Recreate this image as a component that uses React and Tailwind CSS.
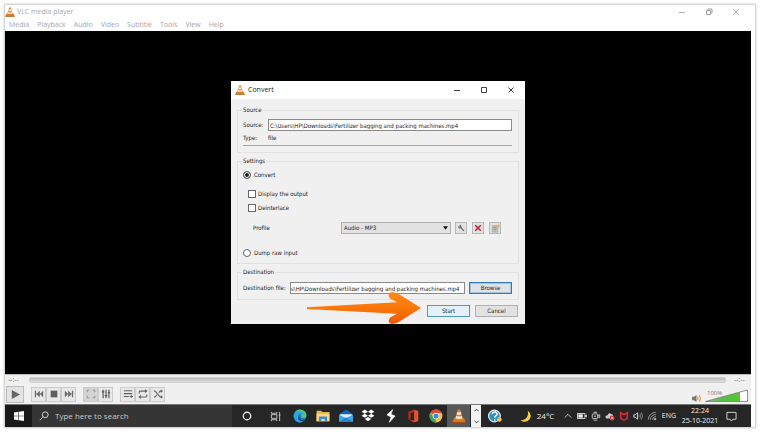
import React from "react";

function Cone({ className }) {
  return (
    <svg viewBox="0 0 24 24" className={className} aria-hidden="true">
      <path d="M3.500 15.500h17l3 7.500h-23z" fill="#d9781c" />
      <path d="M10 1h4l5 17q-7 3-14 0z" fill="#e08325" />
      <path d="M8.800 5.500h6.400l1 3.800q-4.200 1.500-8.400 0z" fill="#f3e6d6" />
      <path d="M6.900 12.200q5.100 1.700 10.200 0l1 3.800q-6.100 2-12.200 0z" fill="#f3e6d6" />
      <path d="M.5 23h23" stroke="#9c4f12" strokeWidth="1.500" />
    </svg>
  );
}

const menus = ["Media", "Playback", "Audio", "Video", "Subtitle", "Tools", "View", "Help"];

function TitleBar() {
  return (
    <header className="bg-white text-[#a6a6a6]">
      <div className="flex h-[14px] items-center pr-[10px]">
        <Cone className="h-[10px] w-[10px]" />
        <h1 className="ml-[2px] text-[7px] leading-[12px]">VLC media player</h1>
        <div className="ml-auto flex items-center gap-[17px]">
          <button aria-label="Minimise" className="h-[10px] w-[10px]">
            <svg viewBox="0 0 10 10" className="h-[10px] w-[10px]"><path d="M2 5.500h6" stroke="#b0b0b0" /></svg>
          </button>
          <button aria-label="Restore" className="h-[10px] w-[10px]">
            <svg viewBox="0 0 10 10" className="h-[10px] w-[10px]"><path d="M2.500 3.500h4v4h-4zM4 3.500v-1.500h4v4h-1.500" fill="none" stroke="#a0a0a0" /></svg>
          </button>
          <button aria-label="Close" className="h-[10px] w-[10px]">
            <svg viewBox="0 0 10 10" className="h-[10px] w-[10px]"><path d="M2 2l6 6M8 2l-6 6" stroke="#a6a6a6" strokeWidth=".9" /></svg>
          </button>
        </div>
      </div>
      <nav className="flex h-[12px] items-center gap-[8px] pl-[4px] text-[7px] leading-[10px]">
        {menus.map((m) => (
          <button key={m}>{m}</button>
        ))}
      </nav>
    </header>
  );
}

function Group({ title, children, className }) {
  return (
    <fieldset className={"min-w-0 border border-[#e1e1e1] pl-[5px] pr-[6px] " + className}>
      <legend className="-ml-px h-[10px] px-px leading-[10px]">{title}</legend>
      {children}
    </fieldset>
  );
}

function Radio({ label, checked }) {
  return (
    <label className="flex h-[10px] items-center gap-[3px]">
      <input
        type="radio"
        name="mode"
        defaultChecked={checked}
        className="h-[8px] w-[8px] appearance-none rounded-full border border-[#666] bg-white checked:bg-[#222] checked:shadow-[inset_0_0_0_1px_#fff]"
      />
      {label}
    </label>
  );
}

function Check({ label }) {
  return (
    <label className="flex h-[10px] items-center gap-[2px]">
      <input type="checkbox" className="h-[8px] w-[8px] appearance-none border border-[#666] bg-white checked:bg-[#333]" />
      {label}
    </label>
  );
}

const smallButton = "flex h-[12px] w-[12px] items-center justify-center border border-[#b8b8b8] bg-[#e2e2e2]";

function ConvertDialog() {
  return (
    <section role="dialog" aria-label="Convert" className="relative w-[294px] bg-[#f0f0f0] font-['DejaVu_Sans_Condensed','Open_Sans',sans-serif] text-[6px] leading-[10px] text-[#1c1c1c]">
      <div className="flex h-[18px] items-center bg-white pl-[4px] pr-[9px]">
        <Cone className="h-[10px] w-[10px]" />
        <h2 className="ml-[3px] font-['Open_Sans','Noto_Sans',sans-serif] text-[7px]">Convert</h2>
        <div className="ml-auto flex gap-[17px]">
          <button aria-label="Minimise">
            <svg viewBox="0 0 10 10" className="h-[10px] w-[10px]"><path d="M2 5.500h6" stroke="#444" /></svg>
          </button>
          <button aria-label="Maximise">
            <svg viewBox="0 0 10 10" className="h-[10px] w-[10px]"><path d="M2.500 2.500h5v5h-5z" fill="none" stroke="#444" /></svg>
          </button>
          <button aria-label="Close">
            <svg viewBox="0 0 10 10" className="h-[10px] w-[10px]"><path d="M2.500 2.500l5 5M7.500 2.500l-5 5" stroke="#222" strokeWidth=".9" /></svg>
          </button>
        </div>
      </div>
      <form className="flex flex-col gap-[3px] px-[6px] pb-[7px] pt-[6px]" onSubmit={(e) => e.preventDefault()}>
        <Group title="Source" className="pb-[6px] pt-[4px]">
          <div className="flex items-center">
            <label htmlFor="source" className="w-[25px] shrink-0 whitespace-nowrap">Source:</label>
            <input
              id="source"
              className="h-[12px] min-w-0 flex-1 border border-[#8a8a8a] bg-white px-px"
              defaultValue="C:\Users\HP\Downloads\Fertilizer bagging and packing machines.mp4"
            />
          </div>
          <div className="mt-[2px] flex border-b border-[#a5a5a5] pb-[2px]">
            <span className="w-[25px]">Type:</span>
            <span>file</span>
          </div>
        </Group>
        <Group title="Settings" className="pb-[5px] pt-[4px]">
          <Radio label="Convert" checked />
          <div className="mt-[9px] flex flex-col gap-[4px] pl-[5px]">
            <Check label="Display the output" />
            <Check label="Deinterlace" />
          </div>
          <div className="mt-[9px] flex items-center pl-[10px] pr-[11px]">
            <label htmlFor="profile">Profile</label>
            <div className="relative ml-auto w-[110px]">
              <select id="profile" className="block h-[12px] w-full appearance-none border border-[#b0b0b0] bg-[#e2e2e2] pl-[2px]">
                <option>Audio - MP3</option>
              </select>
              <svg viewBox="0 0 6 4" className="pointer-events-none absolute right-[3px] top-[4px] h-[4px] w-[5px]"><path d="M0 0h6l-3 4z" fill="#111" /></svg>
            </div>
            <div className="ml-[4px] flex gap-[5px]">
              <button type="button" aria-label="Edit profile" className={smallButton}>
                <svg viewBox="0 0 10 10" className="h-[8px] w-[8px]"><path d="M3.200 1v2.200H1A2.400 2.400 0 0 0 4.300 5.300L8 9.200 9.300 8 5.500 4.200A2.400 2.400 0 0 0 3.200 1z" fill="#6c6c6c" /></svg>
              </button>
              <button type="button" aria-label="Delete profile" className={smallButton}>
                <svg viewBox="0 0 10 10" className="h-[8px] w-[8px]"><path d="M1.500 1.500l7 7M8.500 1.500l-7 7" stroke="#c4232b" strokeWidth="2" /></svg>
              </button>
              <button type="button" aria-label="New profile" className={smallButton}>
                <svg viewBox="0 0 10 10" className="h-[9px] w-[9px]"><path d="M1.500 2h6v7h-6z" fill="#c9c9c2" stroke="#999" strokeWidth=".7" /><path d="M2.500 4h4M2.500 6h4M4.500 2.500v6" stroke="#888" strokeWidth=".6" /><circle cx="8" cy="2.300" r="1.800" fill="#eeb04a" /></svg>
              </button>
            </div>
          </div>
          <div className="mt-[14px]">
            <Radio label="Dump raw input" />
          </div>
        </Group>
        <Group title="Destination" className="pb-[5px] pt-[5px]">
          <div className="flex items-center">
            <label htmlFor="dest" className="w-[47px] shrink-0 whitespace-nowrap">Destination file:</label>
            <input
              id="dest"
              className="h-[12px] min-w-0 flex-1 border border-[#8a8a8a] bg-white"
              defaultValue="s\HP\Downloads\Fertilizer bagging and packing machines.mp4"
            />
            <button type="button" className="ml-[4px] h-[12px] w-[43px] border border-[#2f7cbf] bg-[#e2e2e2] shadow-[inset_0_0_0_1px_#9fc3e0]">Browse</button>
          </div>
        </Group>
        <div className="mt-[2px] flex justify-end gap-[5px] pr-px">
          <button className="h-[12px] w-[43px] border border-[#4e9bc8] bg-[#e5f1fa]">Start</button>
          <button type="button" className="h-[12px] w-[43px] border border-[#b0b0b0] bg-[#e2e2e2]">Cancel</button>
        </div>
      </form>
      <svg viewBox="0 0 116 34" className="pointer-events-none absolute left-[75px] top-[210px] h-[34px] w-[116px]" aria-hidden="true">
        <defs>
          <linearGradient id="arrow" x1="0" y1="0" x2="0" y2="1">
            <stop offset="0" stopColor="#ff8c1a" />
            <stop offset=".55" stopColor="#fb7408" />
            <stop offset="1" stopColor="#e95a00" />
          </linearGradient>
        </defs>
        <path d="M1 16.300L91 11.300 84 7.500Q80 1 87 1L92 2.500 115 17 92 31.500 87 33Q80 33 84 26.500L91 22.700 1 18Z" fill="url(#arrow)" />
      </svg>
    </section>
  );
}

const toolGroups = [
  [
    ["Previous", <path key="a" d="M1 2v8h1.500V2zM7 2v8L2.500 6zM11 2v8L7 6z" fill="#6a6a6a" />],
    ["Stop", <path key="a" d="M2 2h8v8H2z" fill="#5f5f5f" />],
    ["Next", <path key="a" d="M11 2v8H9.500V2zM5 2v8l4.500-4zM1 2v8l4-4z" fill="#6a6a6a" />],
  ],
  [
    ["Full screen", <path key="a" d="M1.500 4V1.500H4M8 1.500h2.500V4M10.500 8v2.500H8M4 10.500H1.500V8" fill="none" stroke="#999" strokeWidth="1.300" />],
    ["Extended settings", <path key="a" d="M2.500 1v10M6 1v10M9.500 1v10M1 3.500h3M4.500 8h3M8 4.500h3" fill="none" stroke="#555" strokeWidth="1.400" />],
  ],
  [
    ["Playlist", <path key="a" d="M1 2h10M1 5.500h10M1 9h6M8 9h4M10 7.500v3" fill="none" stroke="#606060" strokeWidth="1.300" />],
    ["Loop", <path key="a" d="M1.500 5.500V3.500q0-1 1-1H10M10.500 6.500v2q0 1-1 1H2M8.500.800l2 1.700-2 1.700M3.500 7.800l-2 1.700 2 1.700" fill="none" stroke="#666" strokeWidth="1.300" />],
    ["Shuffle", <path key="a" d="M1 2.500h1.500L8.500 9.500H11M1 9.500h1.500l2-2.500M7 4.500l1.500-2H11M9.500 1l1.500 1.500L9.500 4M9.500 8L11 9.500 9.500 11" fill="none" stroke="#666" strokeWidth="1.300" />],
  ],
];

function Controls() {
  return (
    <div className="border-t border-[#bdbdbd] bg-[#f0f0f0] text-[7px] leading-[8px] text-[#777]">
      <div className="flex h-[9px] items-center gap-[8px] pl-[3px] pr-[4px]">
        <span className="w-[13px]">--:--</span>
        <input
          type="range"
          aria-label="Position"
          defaultValue="0"
          className="h-[6px] min-w-0 flex-1 appearance-none rounded-[2px] border border-[#cfcfcf] bg-linear-to-b from-[#bcbcbc] to-[#dedede] [&::-webkit-slider-thumb]:h-0 [&::-webkit-slider-thumb]:w-0 [&::-webkit-slider-thumb]:appearance-none"
        />
        <span className="w-[13px]">--:--</span>
      </div>
      <div className="flex h-[20px] items-center pl-px pr-[3px]">
        <button aria-label="Play" className="flex h-[17px] w-[18px] items-center justify-center border border-[#bcbcbc] bg-[#e3e3e3]">
          <svg viewBox="0 0 12 12" className="h-[11px] w-[11px]"><path d="M2 1l9 5-9 5z" fill="#666" /></svg>
        </button>
        {toolGroups.map((group, i) => (
          <div key={i} className="ml-[7px] flex">
            {group.map(([label, icon]) => (
              <button
                key={label}
                aria-label={label}
                disabled={label === "Full screen"}
                className="flex h-[15px] w-[15px] items-center justify-center border border-[#cbcbcb] bg-[#e8e8e8] disabled:bg-[#d4d4d4]"
              >
                <svg viewBox="0 0 12 12" className="h-[10px] w-[10px]">{icon}</svg>
              </button>
            ))}
          </div>
        ))}
        <button aria-label="Mute" className="ml-auto mt-[8px]">
          <svg viewBox="0 0 10 10" className="h-[9px] w-[9px]"><path d="M0 3h2l3-2v8L2 7H0z" fill="#777" /><path d="M6 3q1.500 2 0 4M8 1.500q2.500 3.500 0 7" fill="none" stroke="#e2a04a" strokeWidth="1.300" /></svg>
        </button>
        <label className="relative ml-[4px] mt-[2px] block h-[16px] w-[43px]">
          <svg viewBox="0 0 43 16" className="absolute inset-0 h-full w-full" aria-hidden="true">
            <defs>
              <linearGradient id="volume"><stop offset="0" stopColor="#9ab59a" /><stop offset=".5" stopColor="#55bf45" /><stop offset="1" stopColor="#55c832" /></linearGradient>
            </defs>
            <path d="M.5 14.500L42.500 3v11.500z" fill="#fff" />
            <path d="M.5 14.500L35 5v9.500z" fill="url(#volume)" />
            <path d="M.5 14.500L42.500 3v11.500z" fill="none" stroke="#777" strokeWidth=".8" />
          </svg>
          <span className="absolute left-[2px] top-[2px] text-[6px]">100%</span>
          <input type="range" aria-label="Volume" defaultValue="100" className="absolute inset-0 w-full opacity-0" />
        </label>
      </div>
    </div>
  );
}

const apps = [
  ["Edge", <g key="a"><circle cx="12" cy="12" r="11" fill="#1673c6" /><path d="M2 8Q6 0 14 1.200 23 3 23 11q0 5-6 5-4 0-3-3 1-4-3-5T2 10z" fill="#4fc878" /><path d="M1 12Q2 4 11 4q7 1 7 6-5-3-8 0-3 5 2 9 4 3 8 0-4 5-10 4-8-2-9-11" fill="#2ba5df" /><path d="M10 12q-3 5 2 8 5 2 9-1-3-1-7 0-4-2-4-7" fill="#0d3f7e" /></g>],
  ["File Explorer", <g key="a"><path d="M1 3h8l2 2h12v16H1z" fill="#e9b545" /><path d="M1 8h22v13H1z" fill="#f9d880" /><path d="M5 21v-8h14v8h-4v-4H9v4z" fill="#3b8fd0" /></g>],
  ["Mail", <g key="a"><path d="M0 9L12 1l12 8v13H0z" fill="#1267b4" /><path d="M2 9h20v6H2z" fill="#dff0fb" /><path d="M0 10l12 6 12-6v12H0z" fill="#3ba5e8" /><path d="M0 22l12-7 12 7z" fill="#2282cc" /></g>],
  ["Dropbox", <path key="a" d="M6.500 1L12 4.500 6.500 8 1 4.500zM17.500 1L23 4.500 17.500 8 12 4.500zM6.500 8L12 11.500 6.500 15 1 11.500zM17.500 8L23 11.500 17.500 15 12 11.500zM12 13.500l5.500 3.500L12 21l-5.500-4z" fill="#fff" />],
  ["Shortcuts", <path key="a" d="M15 1L5 10l7 4-3 9 10-11-7-3z" fill="#fff" stroke="#fff" strokeLinejoin="round" />],
  ["Office", <g key="a"><path d="M14 1l7 2.500v17L14 23z" fill="#e8532a" /><path d="M14 1L4 5v13l4-2V7l6-1.500z" fill="#b92c18" /><path d="M4 18l10 1.500V23z" fill="#d43b1d" /></g>],
  ["Chrome", <g key="a"><circle cx="12" cy="12" r="11" fill="#f4c534" /><path d="M12 12L2.500 6.500A11 11 0 0 1 22 7H12z" fill="#e24435" /><path d="M12 12l-.5 11A11 11 0 0 1 2.500 6.500L7.500 14z" fill="#3aa757" /><circle cx="12" cy="12" r="5.500" fill="#fff" /><circle cx="12" cy="12" r="4.300" fill="#4285d6" /></g>],
];

const tray = [
  ["Show hidden icons", <path key="a" d="M4 16l8-8 8 8" fill="none" stroke="#ddd" strokeWidth="2" />],
  ["Battery", <g key="a"><path d="M1 6h18v12H1zM21 10h2v4h-2z" fill="none" stroke="#eee" strokeWidth="2" /><path d="M3 8h11v8H3z" fill="#eee" /></g>],
  ["Meet now", <g key="a"><rect x="3" y="7" width="13" height="11" rx="2" fill="none" stroke="#ddd" strokeWidth="2" /><path d="M16 11l5-2v7l-5-2M6 3h9M6 22h9" fill="none" stroke="#ddd" strokeWidth="2" /><circle cx="9.500" cy="12.500" r="2" fill="#ddd" /></g>],
  ["OneDrive", <g key="a"><path d="M2 17q-3-6 4-7 3-7 9-3 4 0 5 5l-3 6H4z" fill="#ccc" /><circle cx="17" cy="17" r="6" fill="#d23a3a" /><path d="M14.500 14.500l5 5M19.500 14.500l-5 5" stroke="#fff" strokeWidth="1.500" /></g>],
  ["McAfee", <path key="a" d="M2 1l10 5 10-5v18l-10 5-10-5zM6.500 8v8.500l5.500 3 5.500-3V8L12 11z" fill="#d02a35" fillRule="evenodd" />],
  ["Sound", <g key="a" fill="none" stroke="#eee" strokeWidth="2"><path d="M2 9h4l5-5v16l-5-5H2z" /><path d="M14 9q2 3 0 6M17 6q4 6 0 12M20 3q6 9 0 18" stroke="#888" /></g>],
  ["Network", <g key="a" fill="none" stroke="#aaa" strokeWidth="2"><path d="M3 21Q4 5 21 3M8 21Q9 10 21 8M13 21q1-7 8-8" /><path d="M17 21q0-4 4-4v4z" fill="#eee" /></g>],
];

function Taskbar() {
  return (
    <footer className="flex h-[23px] items-stretch border-t border-[#777] bg-[#262626] text-[8px] text-[#eee]">
      <button aria-label="Start menu" className="flex w-[27px] items-center justify-center bg-[#191919]">
        <svg viewBox="0 0 20 20" className="h-[10px] w-[10px]"><path d="M0 3l9-1.300V9.500H0zM10 1.500L20 0v9.500H10zM0 10.500h9v7.800L0 17zM10 10.500h10V20l-10-1.500z" fill="#fff" /></svg>
      </button>
      <label className="flex w-[200px] items-center gap-[6px] bg-[#353535] pl-[7px]">
        <svg viewBox="0 0 12 12" className="h-[10px] w-[10px]" aria-hidden="true"><path d="M1 11l4-4M7.500 1a3.500 3.500 0 1 1 0 7 3.500 3.500 0 0 1 0-7" fill="none" stroke="#ddd" strokeWidth="1.100" /></svg>
        <input aria-label="Search" placeholder="Type here to search" className="min-w-0 flex-1 placeholder:text-[#c9c9c9]" />
      </label>
      <button aria-label="Cortana" className="flex w-[29px] items-center justify-center">
        <svg viewBox="0 0 12 12" className="h-[10px] w-[10px]"><circle cx="6" cy="6" r="4.500" fill="none" stroke="#eee" strokeWidth="1.600" /></svg>
      </button>
      <button aria-label="Task view" className="flex w-[28px] items-center justify-center">
        <svg viewBox="0 0 12 12" className="h-[11px] w-[11px]"><path d="M1.500 4h6v4h-6zM1.500 1v1.500h6V1M1.500 11V9.500h6V11M10.500 1v10M9.500 4.500h2" fill="none" stroke="#ccc" /></svg>
      </button>
      <div className="flex w-[181px]">
        {apps.map(([label, icon]) => (
          <button key={label} aria-label={label} className="flex flex-1 items-center justify-center">
            <svg viewBox="0 0 24 24" className="h-[14px] w-[14px]">{icon}</svg>
          </button>
        ))}
        <button aria-label="VLC" className="flex flex-1 items-center justify-center bg-[#585858]">
          <Cone className="h-[14px] w-[14px]" />
        </button>
      </div>
      <div className="ml-px flex w-[10px] flex-col items-center justify-between bg-[#f2f2f2] py-[3px]">
        <button aria-label="Scroll up">
          <svg viewBox="0 0 6 4" className="block h-[4px] w-[5px]"><path d="M.5 3.500L3 1l2.500 2.500" fill="none" stroke="#333" /></svg>
        </button>
        <button aria-label="Scroll down">
          <svg viewBox="0 0 6 4" className="block h-[4px] w-[5px]"><path d="M.5.500L3 3 5.500.500" fill="none" stroke="#333" /></svg>
        </button>
      </div>
      <button aria-label="Help" className="flex w-[27px] items-center justify-center">
        <svg viewBox="0 0 24 24" className="h-[14px] w-[14px]"><circle cx="11" cy="12" r="10" fill="#2e8fc0" stroke="#e4f2f8" strokeWidth="2" /><path d="M7.500 9q0-4 4-4t4 3.500q0 2-2.500 3.500-1.500 1-1.500 3M11.500 17v2.500" fill="none" stroke="#fff" strokeWidth="2.500" /><circle cx="19.500" cy="18" r="4" fill="#efbf52" /></svg>
      </button>
      <div className="ml-auto flex items-center pr-[14px]">
        <svg viewBox="0 0 24 24" className="h-[13px] w-[13px]" aria-hidden="true"><path d="M14 1q10 8 3 17-7 7-16 1 8 0 12-6 3-6 1-12" fill="#f5cf3b" /></svg>
        <span className="ml-[4px] w-[26px]">24°C</span>
        <div className="flex gap-[4px]">
          {tray.map(([label, icon]) => (
            <button key={label} aria-label={label}>
              <svg viewBox="0 0 24 24" className="block h-[10px] w-[10px]">{icon}</svg>
            </button>
          ))}
        </div>
        <span className="ml-[5px] text-[7px]">ENG</span>
        <div className="ml-[4px] w-[40px] whitespace-nowrap text-center text-[7px] leading-[10px]">
          <div>22:24</div>
          <div>25-10-2021</div>
        </div>
        <button aria-label="Notifications" className="ml-[6px]">
          <svg viewBox="0 0 12 12" className="block h-[11px] w-[11px]"><path d="M1 1.500h10v7.500H7.500L6 11 4.500 9H1z" fill="none" stroke="#ddd" /></svg>
        </button>
      </div>
    </footer>
  );
}

export default function App() {
  return (
    <div className="flex min-h-screen bg-white p-[5px] font-['Open_Sans','Noto_Sans',sans-serif]">
      <main className="flex min-w-0 flex-1 flex-col bg-white pr-[4px] shadow-[0_0_2px_1px_#c4c4c4]">
        <TitleBar />
        <div className="flex flex-1 items-center justify-center bg-black">
          <ConvertDialog />
        </div>
        <Controls />
        <Taskbar />
      </main>
    </div>
  );
}
